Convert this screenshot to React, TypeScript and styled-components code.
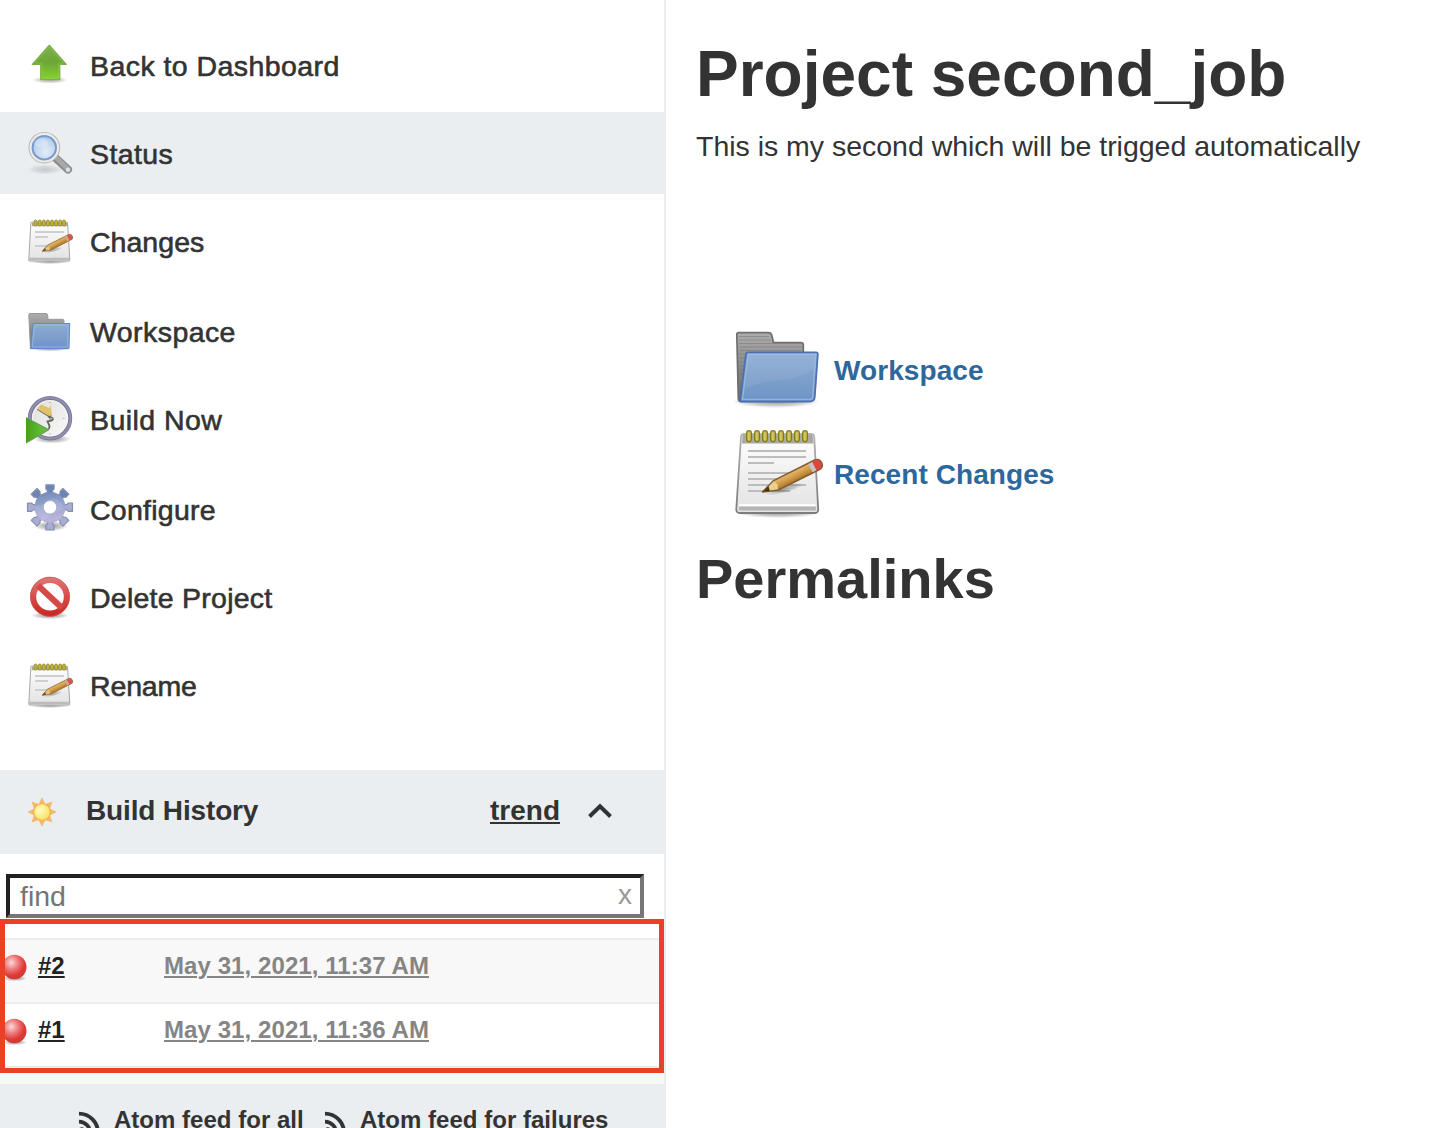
import React from "react";
import styled, { createGlobalStyle } from "styled-components";

const GlobalStyle = createGlobalStyle`
  * { box-sizing: border-box; }
  body {
    margin: 0;
    background: #fff;
    color: #333;
    font-family: "Liberation Sans", Arial, sans-serif;
    font-size: 28px;
    line-height: 32px;
  }
`;

const Page = styled.div`
  display: flex;
  width: 1444px;
  height: 1128px;
  overflow: hidden;
`;

const Sidebar = styled.aside`
  display: flex;
  flex-direction: column;
  flex: none;
  width: 666px;
  height: 1128px;
  border-right: 2px solid #eaeef1;
  overflow: hidden;
`;

const TaskList = styled.nav`
  display: flex;
  flex-direction: column;
  height: 770px;
  flex: none;
  padding-top: 24px;
`;

const Task = styled.a<{ $active?: boolean; $gap: number }>`
  display: flex;
  flex: none;
  align-items: flex-start;
  height: 82px;
  margin-bottom: ${(p) => p.$gap}px;
  padding-left: 26px;
  background: ${(p) => (p.$active ? "#eaeef1" : "transparent")};
`;

const TaskIcon = styled.span<{ $top: number }>`
  display: flex;
  width: 48px;
  height: 48px;
  margin: ${(p) => p.$top}px 16px 0 0;
`;

const TaskLabel = styled.span<{ $spacing: number }>`
  margin-top: 26px;
  white-space: nowrap;
  font-size: 28.5px;
  letter-spacing: ${(p) => p.$spacing}px;
  -webkit-text-stroke: 0.6px #333;
`;

const HistoryHeader = styled.header`
  display: flex;
  flex: none;
  height: 84px;
  padding: 25px 50px 0 26px;
  background: #eaeef1;
  font-weight: 700;
  svg { flex: none; margin-top: 2px; }
  svg:first-child { margin-top: 1px; }
`;

const HistoryTitle = styled.span`
  flex: 1;
  margin-left: 28px;
  letter-spacing: -0.15px;
`;

const TrendLink = styled.a`
  margin-right: 26px;
  text-decoration: underline;
  text-decoration-thickness: 2px;
  text-underline-offset: 2px;
`;

const SearchBox = styled.div`
  display: flex;
  flex: none;
  width: 638px;
  height: 44px;
  margin: 20px 0 1px 6px;
  padding: 2px 8px 0 10px;
  border: 4px solid;
  border-color: #212124 #767676 #767676 #212124;
`;

const SearchInput = styled.input`
  flex: 1;
  min-width: 0;
  height: 32px;
  padding: 0;
  border: 0;
  outline: 0;
  background: transparent;
  font: inherit;
  font-size: 28.5px;
  &::placeholder { color: #757575; opacity: 1; }
`;

const ClearButton = styled.span`
  margin-top: -1px;
  color: #999;
  font-size: 28px;
`;

const BuildList = styled.div`
  position: relative;
  flex: none;
  height: 165px;
  padding-top: 19px;
  background: linear-gradient(#fff 19px, #f8f8f8 19px);
  &::after {
    content: "";
    position: absolute;
    inset: 0 0 11px 0;
    border: 5px solid #eb4025;
  }
`;

const BuildRow = styled.div<{ $shaded?: boolean }>`
  display: flex;
  height: 64px;
  padding-top: 10px;
  border-top: 2px solid #eaeef1;
  background: ${(p) => (p.$shaded ? "#f8f8f8" : "#fff")};
  font-size: 24px;
  font-weight: 700;
  line-height: 31px;
  svg { flex: none; margin: 2px 8px 0 0; }
`;

const BuildListEnd = styled.div`
  height: 2px;
  background: #eaeef1;
`;

const BuildLink = styled.a<{ $muted?: boolean }>`
  flex: none;
  width: ${(p) => (p.$muted ? "auto" : "126px")};
  color: ${(p) => (p.$muted ? "#858585" : "#222")};
  letter-spacing: ${(p) => (p.$muted ? 0.08 : 0)}px;
  span {
    text-decoration: underline;
    text-decoration-thickness: 2px;
    text-underline-offset: 2px;
  }
`;

const Feeds = styled.footer`
  display: flex;
  flex: none;
  height: 60px;
  padding: 20px 0 0 79px;
  background: #eaeef1;
  font-size: 24px;
  font-weight: 700;
  line-height: 31px;
  svg { flex: none; margin-top: 7px; }
`;

const Feed = styled.a<{ $width: number }>`
  display: flex;
  gap: 11px;
  width: ${(p) => p.$width}px;
  letter-spacing: 0.02px;
  white-space: nowrap;
`;

const Main = styled.main`
  display: flex;
  flex-direction: column;
  flex: 1;
  padding: 38px 0 0 30px;
`;

const Title = styled.h1`
  margin: 0;
  font-size: 64px;
  line-height: 72px;
`;

const Description = styled.p`
  margin: 20px 0 160px;
  font-size: 28.5px;
  letter-spacing: -0.02px;
`;

const Shortcuts = styled.div`
  display: flex;
  flex-direction: column;
  gap: 8px;
  padding-left: 34px;
`;

const Shortcut = styled.a`
  display: flex;
  align-items: center;
  gap: 8px;
  height: 96px;
  color: #2d689c;
  font-weight: 700;
  line-height: 33px;
  letter-spacing: 0.08px;
`;

const Subtitle = styled.h2`
  margin: 25px 0 0;
  font-size: 56px;
  line-height: 64px;
`;

const Defs = () => (
  <svg width="0" height="0" style={{ position: "absolute" }}>
    <defs>
      <radialGradient id="shadow">
        <stop offset="0" stopColor="#000" stopOpacity=".4" />
        <stop offset=".6" stopColor="#000" stopOpacity=".2" />
        <stop offset="1" stopColor="#000" stopOpacity="0" />
      </radialGradient>
      <linearGradient id="arrow" x1="0" y1="0" x2="0" y2="1">
        <stop offset="0" stopColor="#7fae52" />
        <stop offset=".5" stopColor="#6ca735" />
        <stop offset="1" stopColor="#86d22e" />
      </linearGradient>
      <radialGradient id="lens" cx=".55" cy=".65" r=".65">
        <stop offset="0" stopColor="#e3edf8" />
        <stop offset=".6" stopColor="#c0d4ee" />
        <stop offset="1" stopColor="#9fbde6" />
      </radialGradient>
      <linearGradient id="paper" x1="0" y1="0" x2="0" y2="1">
        <stop offset="0" stopColor="#fff" />
        <stop offset=".5" stopColor="#f0f0f0" />
        <stop offset="1" stopColor="#e2e2e2" />
      </linearGradient>
      <linearGradient id="paperEdge" x1="0" y1="0" x2="0" y2="1">
        <stop offset="0" stopColor="#b2b2b0" />
        <stop offset="1" stopColor="#7c7c7c" />
      </linearGradient>
      <linearGradient id="pencil" x1="0" y1="0" x2="0" y2="1">
        <stop offset="0" stopColor="#e6bb70" />
        <stop offset=".5" stopColor="#d29b48" />
        <stop offset="1" stopColor="#a87428" />
      </linearGradient>
      <linearGradient id="folderBack" x1="0" y1="0" x2="0" y2="1">
        <stop offset="0" stopColor="#adadad" />
        <stop offset="1" stopColor="#666" />
      </linearGradient>
      <linearGradient id="folderFront" x1="0" y1="0" x2="0" y2="1">
        <stop offset="0" stopColor="#8eacd6" />
        <stop offset=".6" stopColor="#7b9eca" />
        <stop offset="1" stopColor="#6b94c9" />
      </linearGradient>
      <linearGradient id="face" x1="0" y1="0" x2="1" y2="1">
        <stop offset="0" stopColor="#dcdcd8" />
        <stop offset="1" stopColor="#fbfbfb" />
      </linearGradient>
      <linearGradient id="play" x1="0" y1="0" x2="1" y2="0">
        <stop offset="0" stopColor="#43a01c" />
        <stop offset=".6" stopColor="#5fbb30" />
        <stop offset="1" stopColor="#6fb058" />
      </linearGradient>
      <linearGradient id="gear" gradientUnits="userSpaceOnUse" x1="20" y1="0" x2="27" y2="47">
        <stop offset="0" stopColor="#647da9" />
        <stop offset=".4" stopColor="#8da0cb" />
        <stop offset=".75" stopColor="#b9b5dc" />
        <stop offset="1" stopColor="#a5a1ca" />
      </linearGradient>
      <linearGradient id="stop" gradientUnits="userSpaceOnUse" x1="24" y1="2" x2="24" y2="43">
        <stop offset="0" stopColor="#e07a78" />
        <stop offset=".5" stopColor="#d64f4b" />
        <stop offset="1" stopColor="#c42420" />
      </linearGradient>
      <radialGradient id="sun" cx=".4" cy=".4" r=".65">
        <stop offset="0" stopColor="#fffcc8" />
        <stop offset="1" stopColor="#f7e05a" />
      </radialGradient>
      <radialGradient id="ball" cx=".38" cy=".32" r=".72">
        <stop offset="0" stopColor="#fbdada" />
        <stop offset=".4" stopColor="#ec7a78" />
        <stop offset=".75" stopColor="#de3836" />
        <stop offset="1" stopColor="#cf3a38" />
      </radialGradient>
    </defs>
  </svg>
);

const ArrowIcon = () => (
  <svg width="48" height="48" viewBox="0 0 48 48">
    <ellipse cx="24" cy="38" rx="18" ry="3.6" fill="url(#shadow)" opacity=".8" />
    <path d="M23.3 3.2 40.3 22.5H33.8V37.6H14.7V22.5H6.3Z" fill="url(#arrow)" stroke="#7db04a" strokeWidth="1.2" strokeLinejoin="round" />
    <path d="M23.3 5 37.5 21H32.5V36.3H16V21H9.3Z" fill="none" stroke="#9ad25f" strokeOpacity=".4" />
  </svg>
);

const SearchIcon = () => (
  <svg width="48" height="48" viewBox="0 0 48 48">
    <ellipse cx="19" cy="39.5" rx="18" ry="5" fill="url(#shadow)" opacity=".4" />
    <path d="M29 27.5 42 39.5" stroke="#8d8d8d" strokeWidth="8" strokeLinecap="round" />
    <path d="M29.5 27 42 39" stroke="#a9a9a9" strokeWidth="4.6" strokeLinecap="round" />
    <circle cx="42" cy="39.8" r="2.2" fill="#e2e2e2" />
    <circle cx="18.3" cy="17.7" r="13.8" fill="url(#lens)" stroke="#b3b3b1" strokeWidth="4" />
    <circle cx="18.3" cy="17.7" r="13.8" fill="none" stroke="#ececea" strokeWidth="2.2" />
    <circle cx="18.3" cy="17.7" r="11.6" fill="none" stroke="#7599d0" strokeWidth="1.8" />
    <ellipse cx="15" cy="12.7" rx="7" ry="4.5" fill="#fff" opacity=".25" />
  </svg>
);

const NotepadIcon = () => (
  <svg width="96" height="96" viewBox="0 0 96 96">
    <ellipse cx="48" cy="87" rx="42" ry="5" fill="url(#shadow)" />
    <path d="M14 8H81Q84 8 84.2 11L88.2 83Q88.4 87 85 87H10Q6 87 6.3 83L11 11Q11.3 8 14 8Z" fill="url(#paper)" stroke="url(#paperEdge)" strokeWidth="1.8" />
    <path d="M12.5 9H82.5L83.5 17.5H12Z" fill="#a9a9a0" />
    {[19, 27, 35, 43, 51, 59, 67, 75].map((x) => (
      <rect key={x} x={x - 2.3} y="4.6" width="4.6" height="11" rx="2.3" fill="#d5c84e" stroke="#867b1d" strokeWidth="1.4" />
    ))}
    <path d="M18 25H76M18 31H76M18 37H44M18 47H64M18 53H56M18 59H76M18 65H60" stroke="#bcbcbc" strokeWidth="2" />
    <path d="M9 79.3H85.5" stroke="#fff" strokeWidth="2" />
    <path d="M9 82.5H85.8" stroke="#b5b5b5" strokeWidth="4" />
    <ellipse cx="54" cy="63" rx="20" ry="4" transform="rotate(-14 54 63)" fill="url(#shadow)" opacity=".8" />
    <g transform="translate(32.5 66) rotate(-26.5)">
      <path d="M0 0 15-5.3H61Q66-5 66 0T61 5.3H15Z" fill="url(#pencil)" stroke="#7d5c2c" strokeWidth="1.5" strokeLinejoin="round" />
      <path d="M1 0 15-4.5 17 0 15 4.5Z" fill="#e8cf92" />
      <path d="M0 0 8-2.7 7 2.5Z" fill="#4b3510" />
      <path d="M53.5-4.7H58V4.7H53.5Z" fill="#c9c1c5" />
      <path d="M58-4.7H61Q65.4-4.5 65.4 0T61 4.7H58Z" fill="#e04440" />
    </g>
  </svg>
);

const SmallNotepadIcon = () => (
  <svg width="48" height="48" viewBox="0 0 48 48">
    <ellipse cx="24" cy="43.5" rx="21" ry="2.6" fill="url(#shadow)" />
    <path d="M6.2 4H40Q41.5 4 41.6 5.5L43.8 41.5Q43.8 43 42.3 43H4.2Q2.7 43 2.8 41.5L4.8 5.5Q4.9 4 6.2 4Z" fill="url(#paper)" stroke="#adadab" strokeWidth="1.1" />
    <path d="M6 4.5H41.3L41.7 8.2H5.8Z" fill="#a9a994" />
    {[9.6, 13.7, 17.8, 21.9, 26, 30.1, 34.2, 38].map((x) => (
      <rect key={x} x={x - 1.4} y="2" width="2.8" height="6" rx="1.4" fill="#c2b53c" stroke="#938829" strokeWidth=".8" />
    ))}
    <path d="M9 14H38M9 19H22M9 28H31" stroke="#cfcfcf" strokeWidth="1.9" />
    <path d="M3.5 41H43" stroke="#bbb" strokeWidth="2.4" />
    <ellipse cx="27" cy="32" rx="10" ry="2.2" transform="rotate(-14 27 32)" fill="url(#shadow)" opacity=".7" />
    <g transform="translate(16.3 33.2) rotate(-27)">
      <path d="M0 0 7.5-2.9H31Q33.5-2.7 33.5 0T31 2.9H7.5Z" fill="url(#pencil)" stroke="#9a7338" strokeWidth=".9" strokeLinejoin="round" />
      <path d="M.5 0 7.5-2.2 8.5 0 7.5 2.2Z" fill="#dcc288" />
      <path d="M0 0 4-1.5 3.5 1.3Z" fill="#6a5025" />
      <path d="M26.5-2.6H29V2.6H26.5Z" fill="#c9a9a5" />
      <path d="M29-2.6H31Q33.2-2.5 33.2 0T31 2.6H29Z" fill="#da5350" />
    </g>
  </svg>
);

const FolderIcon = () => (
  <svg width="96" height="96" viewBox="0 0 96 96">
    <ellipse cx="46" cy="79.5" rx="44" ry="6.5" fill="url(#shadow)" />
    <path d="M8.5 10.7H38.5Q41 10.7 41.7 13L43.5 20.5H71Q73.3 20.5 73.3 23V70L66 79.3H9.8Q8.4 79 8.3 76L6.8 13Q6.7 10.7 8.5 10.7Z" fill="url(#folderBack)" stroke="#6e6e6e" strokeWidth="1.7" />
    <path d="M9 14.5H39M9 18H41M9 21.5H71M9 25H71M9 28.5H71M9 32H17M9 36H17M9 40H16M9 44H16M9 48H15M9 52H15" stroke="#686868" strokeOpacity=".4" />
    <path d="M18 30.4H86.3Q88 30.4 87.8 32.5L84.7 75.5Q84.2 79.5 80 79.5H11.3Q9.9 79.5 10.2 77.5L16 32.2Q16.2 30.4 18 30.4Z" fill="url(#folderFront)" stroke="#4a71b3" strokeWidth="1.8" />
    <path d="M18.2 32.4H85.7L82.7 75Q82.2 77.5 80 77.5H12.5Z" fill="none" stroke="#a9c0e0" strokeWidth="1.3" opacity=".7" />
    <path d="M18.2 33H85L84 46C70 61 32 55 15.7 67Z" fill="#fff" opacity=".07" />
  </svg>
);

const SmallFolderIcon = () => (
  <svg width="48" height="48" viewBox="0 0 48 48">
    <ellipse cx="24" cy="40.6" rx="22" ry="2.8" fill="url(#shadow)" />
    <path d="M4 5.5H20Q21.3 5.5 21.6 7L22 11.3H36.5Q38 11.3 38 12.8V35L33 40H4.4L2.8 7Q2.8 5.5 4 5.5Z" fill="url(#folderBack)" stroke="#9a9a9a" strokeWidth="1" />
    <path d="M8.3 15.5H43.6L43 39.2Q43 40.5 41.6 40.5H4.7L7 16.8Q7.1 15.5 8.3 15.5Z" fill="url(#folderFront)" stroke="#6189c4" strokeWidth="1.1" />
    <path d="M8.6 16.9H42.4L41.6 39H6.2Z" fill="none" stroke="#a9c3e6" strokeWidth=".9" opacity=".7" />
  </svg>
);

const BuildIcon = () => (
  <svg width="48" height="48" viewBox="0 0 48 48">
    <ellipse cx="26" cy="43" rx="19" ry="4.5" fill="url(#shadow)" />
    <circle cx="24" cy="22.3" r="20.2" fill="url(#face)" stroke="#7c7a9c" strokeWidth="4" />
    <circle cx="24" cy="22.3" r="20.4" fill="none" stroke="#9291b0" strokeWidth="1.8" />
    <circle cx="24" cy="22.3" r="17.6" fill="none" stroke="#fff" strokeWidth="1" opacity=".6" />
    <path d="M12 12.5 15 8.5 23.5 12 24.5 8.5 26 19.5 23.5 20.5Z" fill="#e0c368" />
    <path d="m11.2 13.3 12 7.4 2.3-1" fill="none" stroke="#8d7d50" strokeWidth="1.2" />
    <path d="m22 20.5 4.5 1.6q1.5 2.5-3.5 3l-1.5.3 2 4.5-.5 3" fill="none" stroke="#62625a" strokeWidth="1.8" />
    <circle cx="25" cy="22.8" r="1.3" fill="#eee" stroke="#666" />
    <path d="M36.5 22.3h2M24 37v2M23 6.5h2" stroke="#bbb" />
    <path d="M0 21.3 23.5 33.7 0 47.3Z" fill="url(#play)" />
    <path d="M0 21.7 23 33.7 0 47" fill="none" stroke="#6c9a5c" strokeWidth="1" />
  </svg>
);

const gearTooth = "M21.4 10V6.6L19.9 5V.8H28.1V5L26.6 6.6V10Z";
const gearAngles = [0, 45, 90, 135, 180, 225, 270, 315];

const GearIcon = () => (
  <svg width="48" height="48" viewBox="0 0 48 48">
    <ellipse cx="25" cy="42" rx="17" ry="5" fill="url(#shadow)" />
    {gearAngles.map((a) => (
      <path
        key={a}
        d={gearTooth}
        transform={`rotate(${a} 24 23.3)`}
        fill={a === 0 || a === 45 || a === 315 ? "#6c85b2" : "#a8add2"}
        stroke="#8790b4"
        strokeWidth="1.2"
        strokeLinejoin="round"
      />
    ))}
    <path fillRule="evenodd" d="M24 7.8a15.5 15.5 0 1 1 0 31 15.5 15.5 0 0 1 0-31Zm0 8.9a6.6 6.6 0 1 0 0 13.2 6.6 6.6 0 0 0 0-13.2Z" fill="url(#gear)" />
    <circle cx="24" cy="23.3" r="6.8" fill="#fff" stroke="#9aa1c0" strokeWidth="1" />
    <path d="M8.8 22Q18 22 24 15Q34 12 38 25Q27 28 18 36Q8 32 8.8 22Z" fill="#fff" opacity=".12" />
  </svg>
);

const DeleteIcon = () => (
  <svg width="48" height="48" viewBox="0 0 48 48">
    <ellipse cx="24" cy="41.5" rx="19" ry="3.7" fill="url(#shadow)" />
    <circle cx="24" cy="22.7" r="16.8" fill="#fff" stroke="url(#stop)" strokeWidth="6" />
    <path d="M12 11.5 36 34" stroke="#d44a46" strokeWidth="6.2" />
    <circle cx="24" cy="22.7" r="19.5" fill="none" stroke="#cf504d" strokeWidth=".8" />
  </svg>
);

const SunIcon = () => (
  <svg width="32" height="32" viewBox="0 0 32 32">
    {gearAngles.map((a) => (
      <path key={a} d="M13 8.3 16 2 19 8.3Z" fill="#f3b969" stroke="#f3b969" strokeWidth=".8" strokeLinejoin="round" transform={`rotate(${a} 16 16)`} />
    ))}
    <circle cx="16" cy="16" r="8.4" fill="url(#sun)" stroke="#f0b45c" strokeWidth="1.3" />
  </svg>
);

const ChevronIcon = () => (
  <svg width="28" height="28" viewBox="0 0 28 28">
    <path d="M3.5 19.5 14 9.3 24.5 19.5" fill="none" stroke="#333" strokeWidth="4" />
  </svg>
);

const BallIcon = () => (
  <svg width="30" height="30" viewBox="0 0 30 30">
    <ellipse cx="15" cy="26.3" rx="12" ry="3" fill="url(#shadow)" />
    <circle cx="14.3" cy="15" r="12.2" fill="url(#ball)" />
  </svg>
);

const RssIcon = () => (
  <svg width="24" height="24" viewBox="0 0 24 24">
    <path d="M0 2.7A19 19 0 0 1 19 21.5M0 10.7A11 11 0 0 1 11 21.7" fill="none" stroke="#333" strokeWidth="3.8" />
    <circle cx="2.8" cy="19" r="2.8" fill="#333" />
  </svg>
);

const tasks = [
  { label: "Back to Dashboard", icon: <ArrowIcon />, top: 18, gap: 6, spacing: 0.43 },
  { label: "Status", icon: <SearchIcon />, top: 18, gap: 6, spacing: 0.38, active: true },
  { label: "Changes", icon: <SmallNotepadIcon />, top: 18, gap: 8, spacing: 0.03 },
  { label: "Workspace", icon: <SmallFolderIcon />, top: 18, gap: 6, spacing: 0.43 },
  { label: "Build Now", icon: <BuildIcon />, top: 18, gap: 8, spacing: 0.45 },
  { label: "Configure", icon: <GearIcon />, top: 16, gap: 6, spacing: 0.25 },
  { label: "Delete Project", icon: <DeleteIcon />, top: 18, gap: 6, spacing: 0.25 },
  { label: "Rename", icon: <SmallNotepadIcon />, top: 18, gap: 0, spacing: -0.15 },
];

const builds = [
  { id: "#2", date: "May 31, 2021, 11:37 AM", shaded: true },
  { id: "#1", date: "May 31, 2021, 11:36 AM", shaded: false },
];

export default function App() {
  return (
    <Page>
      <GlobalStyle />
      <Defs />
      <Sidebar>
        <TaskList>
          {tasks.map((t) => (
            <Task key={t.label} $active={t.active} $gap={t.gap}>
              <TaskIcon $top={t.top}>{t.icon}</TaskIcon>
              <TaskLabel $spacing={t.spacing}>{t.label}</TaskLabel>
            </Task>
          ))}
        </TaskList>
        <HistoryHeader>
          <SunIcon />
          <HistoryTitle>Build History</HistoryTitle>
          <TrendLink>trend</TrendLink>
          <ChevronIcon />
        </HistoryHeader>
        <SearchBox>
          <SearchInput placeholder="find" />
          <ClearButton>x</ClearButton>
        </SearchBox>
        <BuildList>
          {builds.map((b) => (
            <BuildRow key={b.id} $shaded={b.shaded}>
              <BallIcon />
              <BuildLink><span>{b.id}</span></BuildLink>
              <BuildLink $muted><span>{b.date}</span></BuildLink>
            </BuildRow>
          ))}
          <BuildListEnd />
        </BuildList>
        <Feeds>
          <Feed $width={246}><RssIcon />Atom feed for all</Feed>
          <Feed $width={290}><RssIcon />Atom feed for failures</Feed>
        </Feeds>
      </Sidebar>
      <Main>
        <Title>Project second_job</Title>
        <Description>This is my second which will be trigged automatically</Description>
        <Shortcuts>
          <Shortcut><FolderIcon />Workspace</Shortcut>
          <Shortcut><NotepadIcon />Recent Changes</Shortcut>
        </Shortcuts>
        <Subtitle>Permalinks</Subtitle>
      </Main>
    </Page>
  );
}
